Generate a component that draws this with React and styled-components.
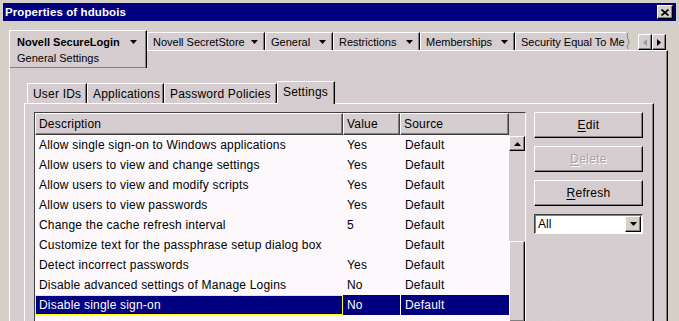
import React from "react";
import styled, { createGlobalStyle, css } from "styled-components";

const GlobalStyle = createGlobalStyle`
  html, body { margin: 0; padding: 0; background: #d4d0c8; }
  body { font-family: "Liberation Sans", Arial, sans-serif; overflow: hidden; }
  * { box-sizing: border-box; }
`;

const dither = css`
  background-color: #d0d0ca;
  background-image: repeating-conic-gradient(#c8d0c2 0 25%, #d8d0d2 0 50%);
  background-size: 2px 2px;
  background-attachment: fixed;
`;

const raised = css`
  border-style: solid;
  border-width: 1px;
  border-color: #ffffff #000000 #000000 #ffffff;
  box-shadow: inset -1px -1px #808080;
`;

const Window = styled.div`
  width: 679px;
  height: 321px;
  overflow: hidden;
  background: #d4d0c8;
  padding: 3px 3px 0 3px;
  display: flex;
  flex-direction: column;
`;

const TitleBar = styled.div`
  flex: 0 0 18px;
  background: #000080;
  display: flex;
  align-items: center;
  justify-content: space-between;
  padding: 0 3px 0 2px;
`;

const TitleText = styled.span`
  color: #ffffff;
  font-weight: bold;
  font-size: 11.5px;
  letter-spacing: 0.1px;
`;

const CloseButton = styled.div`
  ${raised};
  width: 16px;
  height: 14px;
  background: #d4d0c8;
  display: flex;
  align-items: center;
  justify-content: center;
`;

const Body = styled.div`
  flex: 1;
  display: flex;
  flex-direction: column;
  padding: 9px 8px 0 6px;
  min-height: 0;
`;

const TopTabStrip = styled.div`
  flex: 0 0 auto;
  height: 20px;
  min-height: 0;
  display: flex;
  align-items: flex-start;
  position: relative;
  z-index: 2;
`;

const TopTab = styled.div`
  ${dither};
  flex: 0 0 ${(p) => p.$w}px;
  height: ${(p) => (p.$active ? 38 : 18)}px;
  margin-top: ${(p) => (p.$active ? 0 : 2)}px;
  border-top: 1px solid #ffffff;
  border-left: 1px solid #ffffff;
  border-right: ${(p) => (p.$clip ? "none" : "1px solid #000000")};
  box-shadow: ${(p) =>
    p.$clip
      ? "none"
      : p.$active
      ? "inset -1px 0 #808080, inset 0 -1px #808080"
      : "inset -1px 0 #808080"};
  display: flex;
  flex-direction: column;
  justify-content: ${(p) => (p.$active ? "flex-start" : "center")};
  padding: ${(p) => (p.$active ? "4px 0 0 7px" : "0 0 0 5px")};
  font-size: 11px;
  color: #000;
  overflow: hidden;
  white-space: nowrap;
`;

const TabLabel = styled.div`
  display: flex;
  align-items: center;
  height: 14px;
  padding-right: ${(p) => (p.$clip ? 0 : p.$active ? 9 : 6)}px;
  font-weight: ${(p) => (p.$bold ? "bold" : "normal")};
  font-size: 11px;
`;

const TabSub = styled.div`
  height: 14px;
  margin-top: 2px;
  line-height: 14px;
  font-size: 11px;
`;

const Arrow = styled.svg`
  margin-left: auto;
  flex: 0 0 auto;
`;

const DownArrow = () => (
  <Arrow width="7" height="4" viewBox="0 0 7 4">
    <polygon points="0,0 7,0 3.5,4" fill="#000" />
  </Arrow>
);

const Squiggle = styled.svg`
  flex: 0 0 5px;
  margin-top: 2px;
`;

const Spacer = styled.div`
  flex: 1;
`;

const ScrollArrows = styled.div`
  display: flex;
  margin-top: 4px;
  margin-right: 2px;
`;

const ArrowButton = styled.div`
  ${raised};
  ${dither};
  width: 14px;
  height: 16px;
  display: flex;
  align-items: center;
  justify-content: center;
`;

const Panel = styled.div`
  ${dither};
  flex: 1;
  display: flex;
  flex-direction: column;
  border-top: 1px solid #ffffff;
  border-left: 1px solid #ffffff;
  border-right: 1px solid #000000;
  box-shadow: inset -1px 0 #808080;
  padding: 30px 13px 0 14px;
  min-height: 0;
`;

const InnerTabStrip = styled.div`
  flex: 0 0 auto;
  height: 22px;
  min-height: 0;
  display: flex;
  align-items: flex-start;
  padding-left: 3px;
  position: relative;
  z-index: 2;
`;

const InnerTab = styled.div`
  ${dither};
  flex: 0 0 ${(p) => p.$w}px;
  height: ${(p) => (p.$active ? 23 : 20)}px;
  margin-top: ${(p) => (p.$active ? 0 : 2)}px;
  border-top: 1px solid #ffffff;
  border-left: 1px solid #ffffff;
  border-right: 1px solid #000000;
  box-shadow: inset -1px 0 #808080;
  display: flex;
  align-items: ${(p) => (p.$active ? "flex-start" : "center")};
  padding: ${(p) => (p.$active ? "3px 0 0 5px" : "0 0 0 5px")};
  font-size: 12px;
  letter-spacing: 0.2px;
  white-space: nowrap;
`;

const InnerPanel = styled.div`
  flex: 1;
  display: flex;
  gap: 8px;
  border-top: 1px solid #ffffff;
  border-left: 1px solid #ffffff;
  border-right: 1px solid #000000;
  box-shadow: inset -1px 0 #808080;
  padding: 8px 0 0 9px;
  min-height: 0;
`;

const ScrollPane = styled.div`
  flex: 0 0 492px;
  display: flex;
  border-top: 1px solid #404040;
  border-left: 1px solid #404040;
  border-right: 1px solid #ffffff;
`;

const TableCol = styled.div`
  flex: 0 0 474px;
  display: flex;
  flex-direction: column;
  background: #fcf8fc;
`;

const HeaderRow = styled.div`
  ${dither};
  display: flex;
  flex: 0 0 22px;
`;

const HeaderCell = styled.div`
  flex: 0 0 ${(p) => p.$w}px;
  height: 22px;
  border-top: 1px solid #ffffff;
  border-left: 1px solid #ffffff;
  border-right: 1px solid #404040;
  border-bottom: 1px solid #404040;
  box-shadow: inset -1px -1px #808080;
  padding-left: 3px;
  display: flex;
  align-items: center;
  font-size: 12px;
  letter-spacing: 0.2px;
  white-space: nowrap;
`;

const Row = styled.div`
  display: flex;
  flex: 0 0 20px;
  background: ${(p) => (p.$selected ? "#000080" : "transparent")};
  color: ${(p) => (p.$selected ? "#ffffff" : "#000000")};
`;

const Cell = styled.div`
  flex: 0 0 ${(p) => p.$w}px;
  height: 20px;
  display: flex;
  align-items: center;
  padding-left: 4px;
  border-left: ${(p) =>
    p.$sep ? `1px solid ${p.$selected ? "#ffffff" : "transparent"}` : "none"};
  box-shadow: ${(p) => (p.$focus ? "inset 0 0 0 1px #ffff00" : "none")};
  font-size: 12px;
  letter-spacing: 0.2px;
  white-space: nowrap;
  overflow: hidden;
`;

const ScrollBar = styled.div`
  flex: 0 0 16px;
  display: flex;
  flex-direction: column;
  ${dither};
`;

const ScrollCorner = styled.div`
  flex: 0 0 23px;
`;

const ScrollButton = styled.div`
  ${raised};
  ${dither};
  flex: 0 0 15px;
  display: flex;
  align-items: center;
  justify-content: center;
`;

const Track = styled.div`
  flex: 0 0 90px;
`;

const Thumb = styled.div`
  ${raised};
  border-bottom: none;
  flex: 1;
`;

const ButtonCol = styled.div`
  flex: 0 0 109px;
  display: flex;
  flex-direction: column;
  gap: 8px;
  align-self: flex-start;
`;

const Button = styled.div`
  ${raised};
  ${dither};
  height: 26px;
  display: flex;
  align-items: center;
  justify-content: center;
  font-size: 12px;
  letter-spacing: 0.3px;
  color: ${(p) => (p.$disabled ? "#a8a4a0" : "#000000")};
  text-shadow: ${(p) => (p.$disabled ? "1px 1px #ffffff" : "none")};
  u { text-decoration: underline; text-underline-offset: 2px; }
`;

const Combo = styled.div`
  height: 20px;
  display: flex;
  align-items: center;
  background: #ffffff;
  border-style: solid;
  border-width: 1px;
  border-color: #404040 #ffffff #ffffff #404040;
  box-shadow: inset 1px 1px #808080;
  padding: 1px 1px 1px 3px;
  font-size: 12px;
`;

const ComboText = styled.span`
  flex: 1;
`;

const ComboButton = styled.div`
  ${raised};
  background: #d4d0c8;
  width: 16px;
  height: 16px;
  display: flex;
  align-items: center;
  justify-content: center;
`;

const rows = [
  ["Allow single sign-on to Windows applications", "Yes", "Default"],
  ["Allow users to view and change settings", "Yes", "Default"],
  ["Allow users to view and modify scripts", "Yes", "Default"],
  ["Allow users to view passwords", "Yes", "Default"],
  ["Change the cache refresh interval", "5", "Default"],
  ["Customize text for the passphrase setup dialog box", "", "Default"],
  ["Detect incorrect passwords", "Yes", "Default"],
  ["Disable advanced settings of Manage Logins", "No", "Default"],
  ["Disable single sign-on", "No", "Default"],
];
const SELECTED = 8;
const cols = [308, 57, 109];

const topTabs = [
  { label: "Novell SecretStore", w: 118 },
  { label: "General", w: 68 },
  { label: "Restrictions", w: 87 },
  { label: "Memberships", w: 95 },
];

export default function App() {
  return (
    <>
      <GlobalStyle />
      <Window>
        <TitleBar>
          <TitleText>Properties of hdubois</TitleText>
          <CloseButton>
            <svg width="8" height="7" viewBox="0 0 8 7">
              <path d="M0.5 0.5 L7.5 6.5 M7.5 0.5 L0.5 6.5" stroke="#000" strokeWidth="1.6" />
            </svg>
          </CloseButton>
        </TitleBar>
        <Body>
          <TopTabStrip>
            <TopTab $w={138} $active>
              <TabLabel $bold $active>
                Novell SecureLogin
                <DownArrow />
              </TabLabel>
              <TabSub>General Settings</TabSub>
            </TopTab>
            {topTabs.map((t) => (
              <TopTab key={t.label} $w={t.w}>
                <TabLabel>
                  {t.label}
                  <DownArrow />
                </TabLabel>
              </TopTab>
            ))}
            <TopTab $w={111} $clip>
              <TabLabel $clip>Security Equal To Me</TabLabel>
            </TopTab>
            <Squiggle width="5" height="18" viewBox="0 0 5 18">
              <path d="M2 1 Q0 4 2 7 Q4 10 2 13 Q0 15 2 17" stroke="#808080" fill="none" />
            </Squiggle>
            <Spacer />
            <ScrollArrows>
              <ArrowButton>
                <svg width="4" height="7" viewBox="0 0 4 7">
                  <polygon points="4,0 4,7 0,3.5" fill="#9a9a9a" />
                </svg>
              </ArrowButton>
              <ArrowButton>
                <svg width="4" height="7" viewBox="0 0 4 7">
                  <polygon points="0,0 0,7 4,3.5" fill="#000" />
                </svg>
              </ArrowButton>
            </ScrollArrows>
          </TopTabStrip>
          <Panel>
            <InnerTabStrip>
              <InnerTab $w={60}>User IDs</InnerTab>
              <InnerTab $w={77}>Applications</InnerTab>
              <InnerTab $w={113}>Password Policies</InnerTab>
              <InnerTab $w={58} $active>Settings</InnerTab>
            </InnerTabStrip>
            <InnerPanel>
              <ScrollPane>
                <TableCol>
                  <HeaderRow>
                    <HeaderCell $w={cols[0]}>Description</HeaderCell>
                    <HeaderCell $w={cols[1]}>Value</HeaderCell>
                    <HeaderCell $w={cols[2]}>Source</HeaderCell>
                  </HeaderRow>
                  {rows.map((r, i) => {
                    const sel = i === SELECTED;
                    return (
                      <Row key={r[0]} $selected={sel}>
                        <Cell $w={cols[0]} $focus={sel}>{r[0]}</Cell>
                        <Cell $w={cols[1]}>{r[1]}</Cell>
                        <Cell $w={cols[2]} $sep $selected={sel}>{r[2]}</Cell>
                      </Row>
                    );
                  })}
                </TableCol>
                <ScrollBar>
                  <ScrollCorner />
                  <ScrollButton>
                    <svg width="7" height="4" viewBox="0 0 7 4">
                      <polygon points="0,4 7,4 3.5,0" fill="#000" />
                    </svg>
                  </ScrollButton>
                  <Track />
                  <Thumb />
                </ScrollBar>
              </ScrollPane>
              <ButtonCol>
                <Button>
                  <span><u>E</u>dit</span>
                </Button>
                <Button $disabled>
                  <span><u>D</u>elete</span>
                </Button>
                <Button>
                  <span><u>R</u>efresh</span>
                </Button>
                <Combo>
                  <ComboText>All</ComboText>
                  <ComboButton>
                    <svg width="7" height="4" viewBox="0 0 7 4">
                      <polygon points="0,0 7,0 3.5,4" fill="#000" />
                    </svg>
                  </ComboButton>
                </Combo>
              </ButtonCol>
            </InnerPanel>
          </Panel>
        </Body>
      </Window>
    </>
  );
}
